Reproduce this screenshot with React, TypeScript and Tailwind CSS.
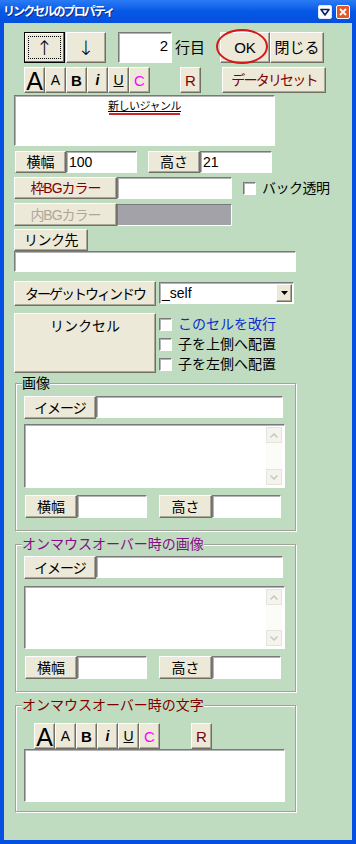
import React from 'react';
import clsx from 'clsx';

const raised =
  'bg-[#ece9d8] border border-t-white border-l-white border-r-[#716f64] border-b-[#716f64] shadow-[inset_-1px_-1px_0_#aca899]';
const sunken =
  'bg-white border border-t-[#7a7a7a] border-l-[#7a7a7a] border-r-white border-b-white shadow-[inset_1px_1px_0_#b4b4b4]';

function Btn({ className, children }: { className?: string; children?: React.ReactNode }) {
  return (
    <button
      type="button"
      className={clsx('flex items-center justify-center shrink-0 text-[14px] leading-none', raised, className)}
    >
      {children}
    </button>
  );
}

function Field({ className, children }: { className?: string; children?: React.ReactNode }) {
  return <div className={clsx('shrink-0 flex items-center text-[14px] leading-none', sunken, className)}>{children}</div>;
}

function Check() {
  return <span className={clsx('block w-[13px] h-[13px] shrink-0', sunken)} />;
}

function Toolbar() {
  return (
    <div className="flex">
      <Btn className="w-[21px] h-[26px] text-[25px] pt-[2px]">A</Btn>
      <Btn className="w-[21px] h-[26px] text-[14px]">A</Btn>
      <Btn className="w-[21px] h-[26px] text-[15px] font-bold">B</Btn>
      <Btn className="w-[21px] h-[26px] text-[14px] italic font-bold">i</Btn>
      <Btn className="w-[21px] h-[26px] text-[14px] underline">U</Btn>
      <Btn className="w-[21px] h-[26px] text-[15px] text-[#ff00ff]">C</Btn>
    </div>
  );
}

function ScrollArea({ className }: { className?: string }) {
  return (
    <div className={clsx('flex justify-end p-[2px]', sunken, className)}>
      <div className="w-[16px] h-full bg-[#fbfbf8] flex flex-col justify-between">
        <div className="h-[16px] border border-[#e4e3dc] bg-[#f4f3ee] flex items-center justify-center">
          <svg width="8" height="5" viewBox="0 0 8 5">
            <path d="M0.5 4.5 L4 1 L7.5 4.5" fill="none" stroke="#c9c7ba" strokeWidth="1.5" />
          </svg>
        </div>
        <div className="h-[16px] border border-[#e4e3dc] bg-[#f4f3ee] flex items-center justify-center">
          <svg width="8" height="5" viewBox="0 0 8 5">
            <path d="M0.5 0.5 L4 4 L7.5 0.5" fill="none" stroke="#c9c7ba" strokeWidth="1.5" />
          </svg>
        </div>
      </div>
    </div>
  );
}

function SizeRow() {
  return (
    <div className="flex items-start">
      <Btn className="ml-[1px] w-[52px] h-[23px]">横幅</Btn>
      <Field className="w-[70px] h-[23px]" />
      <Btn className="ml-[12px] w-[53px] h-[23px]">高さ</Btn>
      <Field className="w-[69px] h-[23px]" />
    </div>
  );
}

function Group({
  title,
  color,
  className,
  children,
}: {
  title: string;
  color: string;
  className?: string;
  children: React.ReactNode;
}) {
  return (
    <fieldset
      className={clsx(
        'ml-[1px] w-[281px] border border-[#a2a29c] shadow-[1px_1px_0_#fff,inset_1px_1px_0_#fff] pl-[8px]',
        className
      )}
    >
      <legend className={clsx('-ml-[2px] px-0 text-[14px] leading-[16px] bg-[#c0dcc0]', color)}>{title}</legend>
      {children}
    </fieldset>
  );
}

export default function App() {
  return (
    <div className="w-[356px] h-[844px] bg-[#0550e2] flex flex-col font-['Liberation_Sans','Noto_Sans_CJK_JP',sans-serif] text-black">
      {/* title bar */}
      <div className="h-[23px] shrink-0 flex items-center justify-between px-[3px] bg-gradient-to-b from-[#2a7bf5] via-[#0558e6] to-[#0550dd]">
        <span className="text-white font-bold text-[12px] tracking-[-1.9px] [text-shadow:1px_1px_0_#0b2a8a]">
          リンクセルのプロパティ
        </span>
        <div className="flex items-center gap-[4px] pr-[3px]">
          <span className="w-[14px] h-[14px] bg-white border border-[#e0e8ff] rounded-[2px] flex items-center justify-center">
            <svg width="10" height="8" viewBox="0 0 10 8">
              <path d="M1 1.5 H9 L5 7 Z" fill="#fff" stroke="#0a1e60" strokeWidth="1.6" strokeLinejoin="round" />
            </svg>
          </span>
          <span className="w-[14px] h-[14px] bg-[#e2582c] border border-white rounded-[2px] flex items-center justify-center">
            <svg width="8" height="8" viewBox="0 0 8 8">
              <path d="M1 1 L7 7 M7 1 L1 7" stroke="#fff" strokeWidth="1.8" />
            </svg>
          </span>
        </div>
      </div>

      {/* body */}
      <div className="flex-1 mx-[4px] mb-[4px] bg-[#c0dcc0] pl-[10px] flex flex-col">
        {/* row 1 */}
        <div className="mt-[9px] ml-[10px] flex items-start">
          <button
            type="button"
            className="w-[41px] h-[31px] shrink-0 bg-[#ece9d8] border border-black p-[3px] shadow-[inset_-1px_-1px_0_#716f64,inset_1px_1px_0_#fff]"
          >
            <span className="w-full h-full border border-dotted border-black flex items-center justify-center text-[20px] leading-none font-['DejaVu_Sans',sans-serif] font-light">
              ↑
            </span>
          </button>
          <Btn className="ml-[1px] w-[40px] h-[31px] text-[20px] font-['DejaVu_Sans',sans-serif] font-light">↓</Btn>
          <Field className="ml-[12px] w-[54px] h-[31px] justify-end items-start pr-[3px] pt-[5px] text-[15px]">2</Field>
          <span className="ml-[3px] w-[45px] text-[15px] leading-[31px]">行目</span>
          <div className="relative">
            <Btn className="w-[50px] h-[31px] text-[15px]">OK</Btn>
            <span className="absolute left-[-4px] top-[-3px] w-[52px] h-[35px] rounded-[50%] border-[2.5px] border-[#d41818]" />
          </div>
          <Btn className="w-[54px] h-[31px] text-[15px]">閉じる</Btn>
        </div>

        {/* row 2 */}
        <div className="mt-[4px] ml-[10px] flex items-start">
          <Toolbar />
          <Btn className="ml-[30px] w-[21px] h-[26px] text-[15px] text-[#800000]">R</Btn>
          <Btn className="ml-[21px] w-[104px] h-[26px] text-[#800000] tracking-[-1.8px]">データリセット</Btn>
        </div>

        {/* text area */}
        <div className={clsx('mt-[2px] w-[261px] h-[51px] flex flex-col items-center pt-[4px]', sunken)}>
          <span className="text-[11px] leading-[12px] underline tracking-[-0.5px]">新しいジャンル</span>
          <span className="mt-[1px] w-[71px] h-[2px] bg-[#c8262a]" />
        </div>

        {/* width / height */}
        <div className="mt-[5px] flex items-start">
          <Btn className="ml-[1px] w-[51px] h-[22px]">横幅</Btn>
          <Field className="w-[71px] h-[22px] pl-[2px]">100</Field>
          <Btn className="ml-[11px] w-[52px] h-[22px]">高さ</Btn>
          <Field className="w-[72px] h-[22px] pl-[2px]">21</Field>
        </div>

        {/* frame bg color */}
        <div className="mt-[4px] flex items-center">
          <Btn className="w-[103px] h-[22px] text-[#800000] tracking-[-1px]">枠BGカラー</Btn>
          <Field className="w-[115px] h-[22px]" />
          <span className="ml-[11px] block">
            <Check />
          </span>
          <span className="ml-[6px] text-[14px] leading-none tracking-[-0.5px]">バック透明</span>
        </div>

        {/* inner bg color */}
        <div className="mt-[4px] flex items-center">
          <Btn className="w-[103px] h-[23px] text-[#aca899] tracking-[-1px]">内BGカラー</Btn>
          <div className="w-[115px] h-[22px] bg-[#a3a2a8] border border-t-[#7a7a7a] border-l-[#7a7a7a] border-r-white border-b-white" />
        </div>

        {/* link target */}
        <Btn className="mt-[3px] w-[74px] h-[22px] tracking-[-0.5px]">リンク先</Btn>
        <Field className="w-[282px] h-[21px]" />

        {/* target window */}
        <div className="mt-[9px] flex items-start">
          <Btn className="w-[142px] h-[25px] tracking-[-2px]">ターゲットウィンドウ</Btn>
          <div className={clsx('ml-[3px] mt-[1px] w-[135px] h-[22px] flex items-center justify-between pr-[1px]', sunken)}>
            <span className="pl-[2px] text-[14px] leading-none">_self</span>
            <span className={clsx('w-[16px] h-[18px] flex items-center justify-center', raised)}>
              <svg width="7" height="4" viewBox="0 0 7 4">
                <path d="M0 0 H7 L3.5 4 Z" fill="#000" />
              </svg>
            </span>
          </div>
        </div>

        {/* link cell */}
        <div className="mt-[7px] flex items-start">
          <div className={clsx('w-[142px] h-[60px] flex justify-center pt-[5px] text-[14px] leading-none', raised)}>
            リンクセル
          </div>
          <div className="ml-[3px] mt-[1px] flex flex-col text-[14px]">
            <div className="h-[20px] flex items-center">
              <Check />
              <span className="ml-[6px] text-[#0a2ecc]">このセルを改行</span>
            </div>
            <div className="h-[20px] flex items-center">
              <Check />
              <span className="ml-[6px]">子を上側へ配置</span>
            </div>
            <div className="h-[20px] flex items-center">
              <Check />
              <span className="ml-[6px]">子を左側へ配置</span>
            </div>
          </div>
        </div>

        {/* image group */}
        <Group title="画像" color="text-black" className="mt-[1px] pb-[12px]">
          <div className="mt-[5px] flex items-start">
            <Btn className="w-[72px] h-[23px] tracking-[-1px]">イメージ</Btn>
            <Field className="w-[187px] h-[22px]" />
          </div>
          <ScrollArea className="mt-[5px] w-[261px] h-[64px]" />
          <div className="mt-[7px]">
            <SizeRow />
          </div>
        </Group>

        {/* mouse over image group */}
        <Group title="オンマウスオーバー時の画像" color="text-[#8a0a8a]" className="mt-[5px] pb-[12px]">
          <div className="mt-[4px] flex items-start">
            <Btn className="w-[72px] h-[23px] tracking-[-1px]">イメージ</Btn>
            <Field className="w-[187px] h-[22px]" />
          </div>
          <ScrollArea className="mt-[7px] w-[261px] h-[63px]" />
          <div className="mt-[7px]">
            <SizeRow />
          </div>
        </Group>

        {/* mouse over text group */}
        <Group title="オンマウスオーバー時の文字" color="text-[#800000]" className="mt-[5px] pb-[9px]">
          <div className="mt-[10px] ml-[10px] flex items-start">
            <Toolbar />
            <Btn className="ml-[31px] w-[21px] h-[26px] text-[15px] text-[#800000]">R</Btn>
          </div>
          <div className={clsx('w-[261px] h-[53px]', sunken)} />
        </Group>
      </div>
    </div>
  );
}
